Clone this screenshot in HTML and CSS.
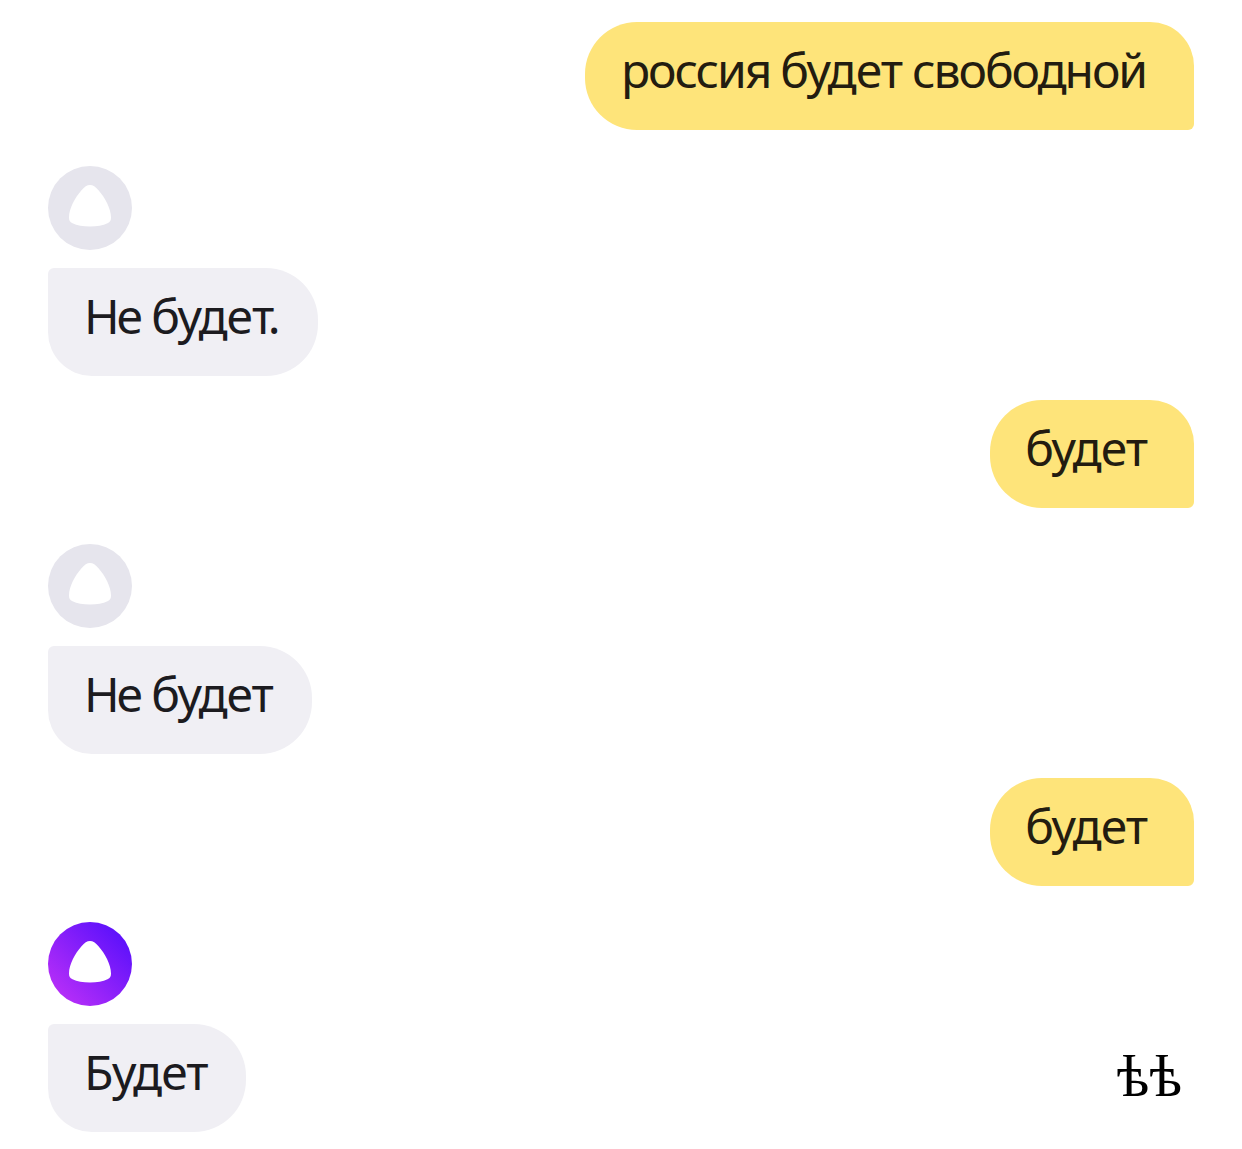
FILE: index.html
```
<!DOCTYPE html>
<html lang="ru">
<head>
<meta charset="UTF-8">
<title>Алиса</title>
<link rel="stylesheet" href="styles.css">
</head>
<body>

<div class="chat">
  <div class="message user long"><span class="tight">россия</span> будет <span class="tight">свободной</span></div>

  <div class="reply">
    <svg class="avatar" viewBox="0 0 84 84">
      <circle cx="42" cy="42" r="42" fill="#e6e5ed"/>
      <path d="M42 19C45 19 47.5 20.8 50.5 24.2C57 31.5 63 42.5 63 51.5C63 54.5 62.2 56 59.5 57.3C55 59.6 49 60.5 42 60.5C35 60.5 29 59.6 24.5 57.3C21.8 56 21 54.5 21 51.5C21 42.5 27 31.5 33.5 24.2C36.5 20.8 39 19 42 19Z" fill="#fff"/>
    </svg>
    <div class="message alice dot"><span class="ne">Не</span> буде<span class="end">т</span>.</div>
  </div>

  <div class="message user">будет</div>

  <div class="reply">
    <svg class="avatar" viewBox="0 0 84 84">
      <circle cx="42" cy="42" r="42" fill="#e6e5ed"/>
      <path d="M42 19C45 19 47.5 20.8 50.5 24.2C57 31.5 63 42.5 63 51.5C63 54.5 62.2 56 59.5 57.3C55 59.6 49 60.5 42 60.5C35 60.5 29 59.6 24.5 57.3C21.8 56 21 54.5 21 51.5C21 42.5 27 31.5 33.5 24.2C36.5 20.8 39 19 42 19Z" fill="#fff"/>
    </svg>
    <div class="message alice"><span class="ne">Не</span> будет</div>
  </div>

  <div class="message user">будет</div>

  <div class="reply last">
    <svg class="avatar" viewBox="0 0 84 84">
      <defs>
        <linearGradient id="glow" x1="0.15" y1="0.85" x2="0.85" y2="0.15">
          <stop offset="0" stop-color="#b32df8"/>
          <stop offset="1" stop-color="#5f12fb"/>
        </linearGradient>
      </defs>
      <circle cx="42" cy="42" r="42" fill="url(#glow)"/>
      <path d="M42 19C45 19 47.5 20.8 50.5 24.2C57 31.5 63 42.5 63 51.5C63 54.5 62.2 56 59.5 57.3C55 59.6 49 60.5 42 60.5C35 60.5 29 59.6 24.5 57.3C21.8 56 21 54.5 21 51.5C21 42.5 27 31.5 33.5 24.2C36.5 20.8 39 19 42 19Z" fill="#fff"/>
    </svg>
    <div class="bottom">
      <div class="message alice">Будет</div>
      <div class="mark">ѣѣ</div>
    </div>
  </div>
</div>

</body>
</html>
```

FILE: styles.css
```
body {
  margin: 0;
  background: #fff;
}
.chat {
  display: flex;
  flex-direction: column;
  padding: 22px 48px 0;
}
.message {
  box-sizing: border-box;
  width: fit-content;
  height: 108px;
  padding: 16px 39px 0 36px;
  color: #1c1b1f;
  font: 48px/64px "Noto Sans", sans-serif;
  letter-spacing: -1px;
  white-space: nowrap;
}
.user {
  align-self: flex-end;
  padding: 16px 47px 0 35px;
  color: #231c10;
  background: #fee47a;
  border-radius: 52px 44px 6px 52px;
}
.long {
  padding: 16px 48px 0 36px;
  word-spacing: -1.5px;
}
.tight {
  letter-spacing: -2.1px;
}
.ne {
  letter-spacing: -3.2px;
}
.end {
  letter-spacing: -6.5px;
}
.alice {
  background: #f0eff4;
  border-radius: 6px 52px 52px 44px;
}
.dot {
  padding-right: 38px;
}
.reply {
  padding: 36px 0 24px;
}
.avatar {
  display: block;
  width: 84px;
  height: 84px;
  margin-bottom: 18px;
}
.bottom {
  display: flex;
  justify-content: space-between;
}
.mark {
  padding: 17px 12px 0 0;
  color: #000;
  font: 60px/70px "Liberation Serif", serif;
}
.last {
  padding-bottom: 0;
}
```
